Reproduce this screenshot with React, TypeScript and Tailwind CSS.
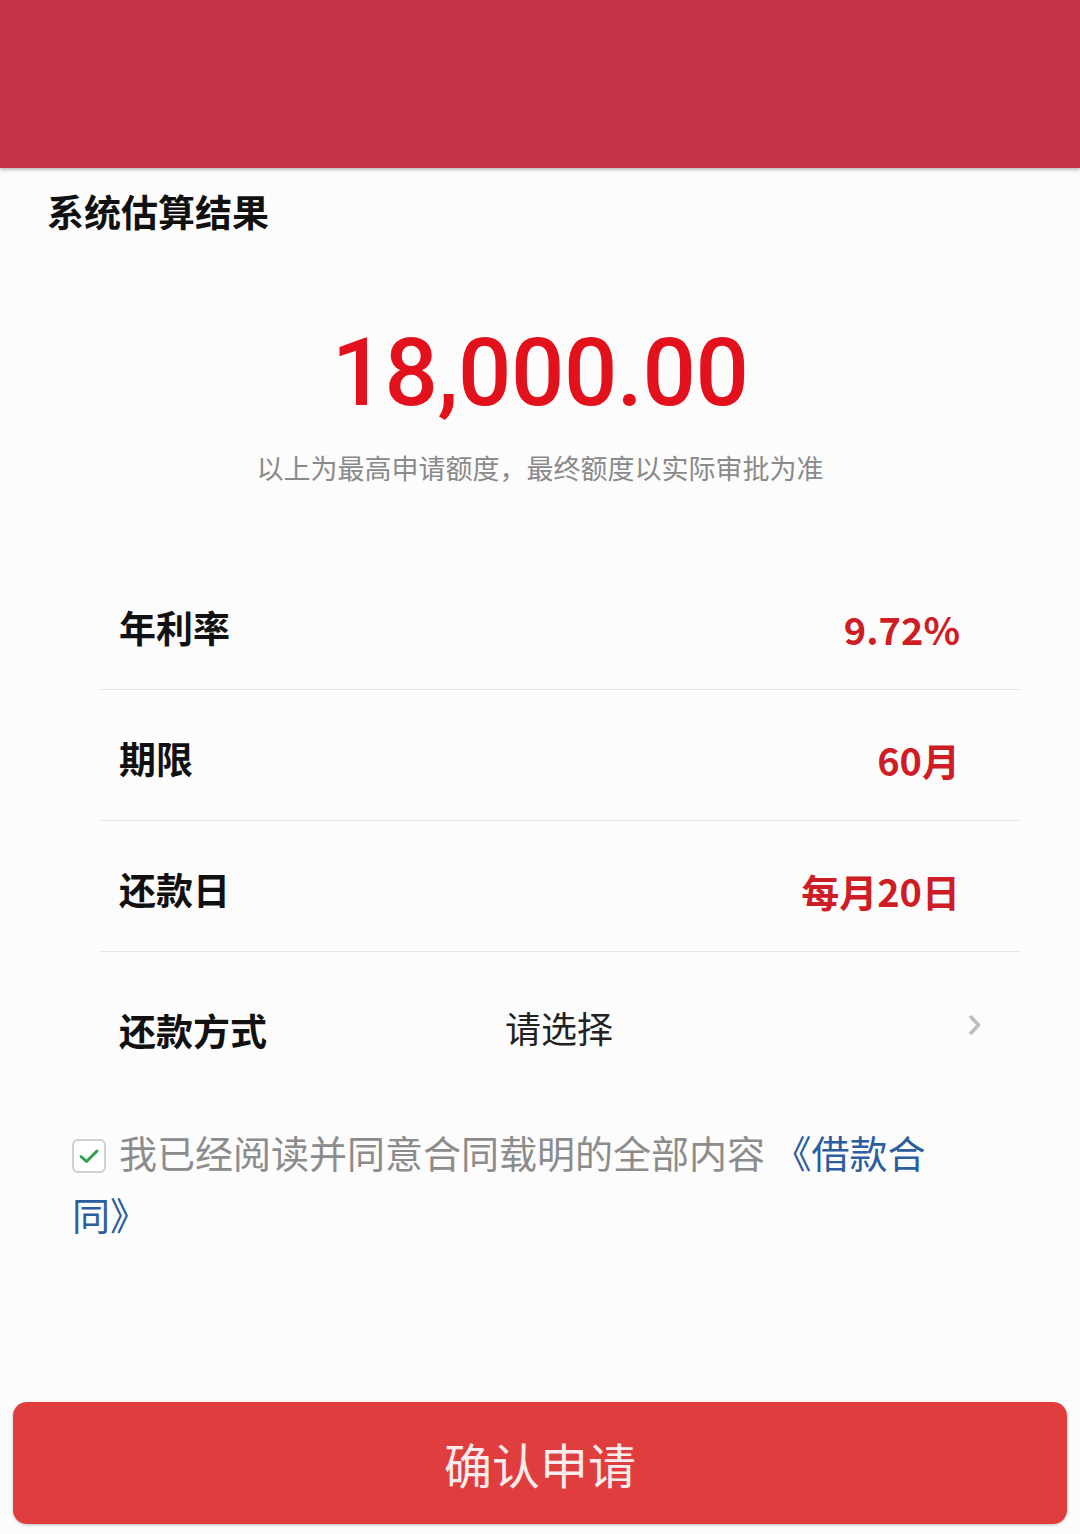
const cjk = { fontFamily: '"Noto Sans CJK SC", "Noto Sans", sans-serif' };

interface Row {
  label: string;
  value: string;
}

const rows: Row[] = [
  { label: "年利率", value: "9.72%" },
  { label: "期限", value: "60月" },
  { label: "还款日", value: "每月20日" },
];

const App: React.FC = () => {
  return (
    <div className="flex min-h-[1534px] w-[1080px] flex-col bg-[#fcfcfc]" style={cjk}>
      {/* 顶部红色栏 */}
      <div className="h-[168px] w-full bg-[#c43248] shadow-[0_2px_3px_rgba(0,0,0,0.25)]" />

      <h1 className="pl-[47px] pt-[19px] text-[37px] font-bold leading-[48px] text-[#111]">
        系统估算结果
      </h1>

      <div
        className="mt-[91px] text-center text-[94px] font-medium leading-none tracking-[-0.5px] text-[#e3111b]"
        style={{ fontFamily: "Roboto, sans-serif" }}
      >
        18,000.00
      </div>
      <p className="mt-[32px] text-center text-[27px] leading-[32px] text-[#8a8a8a]">
        以上为最高申请额度，最终额度以实际审批为准
      </p>

      {/* 明细 */}
      <div className="ml-[100px] mr-[60px] mt-[75px]">
        {rows.map((row) => (
          <div
            key={row.label}
            className="flex h-[131px] items-center justify-between border-b border-[#e6e6e6] pl-[19px] pr-[60px] pt-[8px]"
          >
            <span className="text-[37px] font-bold text-[#111]">{row.label}</span>
            <span className="text-[38px] font-semibold text-[#cf1d26]">{row.value}</span>
          </div>
        ))}
        <div className="flex h-[150px] items-center pl-[19px] pr-[38px]">
          <span className="w-[386px] pt-[8px] text-[37px] font-bold text-[#111]">还款方式</span>
          <span className="flex-1 text-[36px] text-[#222]">请选择</span>
          <svg width="14" height="22" viewBox="0 0 14 22" fill="none" className="-translate-y-[2px]">
            <path d="M3 3l7.5 8L3 19" stroke="#bdbdbd" strokeWidth="3.5" strokeLinecap="round" strokeLinejoin="round" />
          </svg>
        </div>
      </div>

      {/* 协议 */}
      <div className="ml-[72px] mt-[19px] w-[870px] text-[38px] leading-[62px] text-[#8c8c8c]">
        <span className="mr-[13px] inline-flex h-[34px] w-[34px] -translate-y-[2px] items-center justify-center rounded-[6px] border-2 border-[#d0d0d0] bg-white align-middle">
          <svg width="22" height="18" viewBox="0 0 22 18" fill="none">
            <path d="M3 9.5l5.5 5L19 4" stroke="#2ea34c" strokeWidth="3" strokeLinecap="round" strokeLinejoin="round" />
          </svg>
        </span>
        我已经阅读并同意合同载明的全部内容{" "}
        <span className="text-[#2c5d9e]">《借款合同》</span>
      </div>

      <button className="mx-[13px] mb-[10px] mt-auto flex h-[122px] items-center justify-center rounded-[14px] bg-[#e03e3e] text-[48px] text-[#f8ecec] shadow-[0_1px_3px_rgba(0,0,0,0.25)]">
        确认申请
      </button>
    </div>
  );
};

export default App;
